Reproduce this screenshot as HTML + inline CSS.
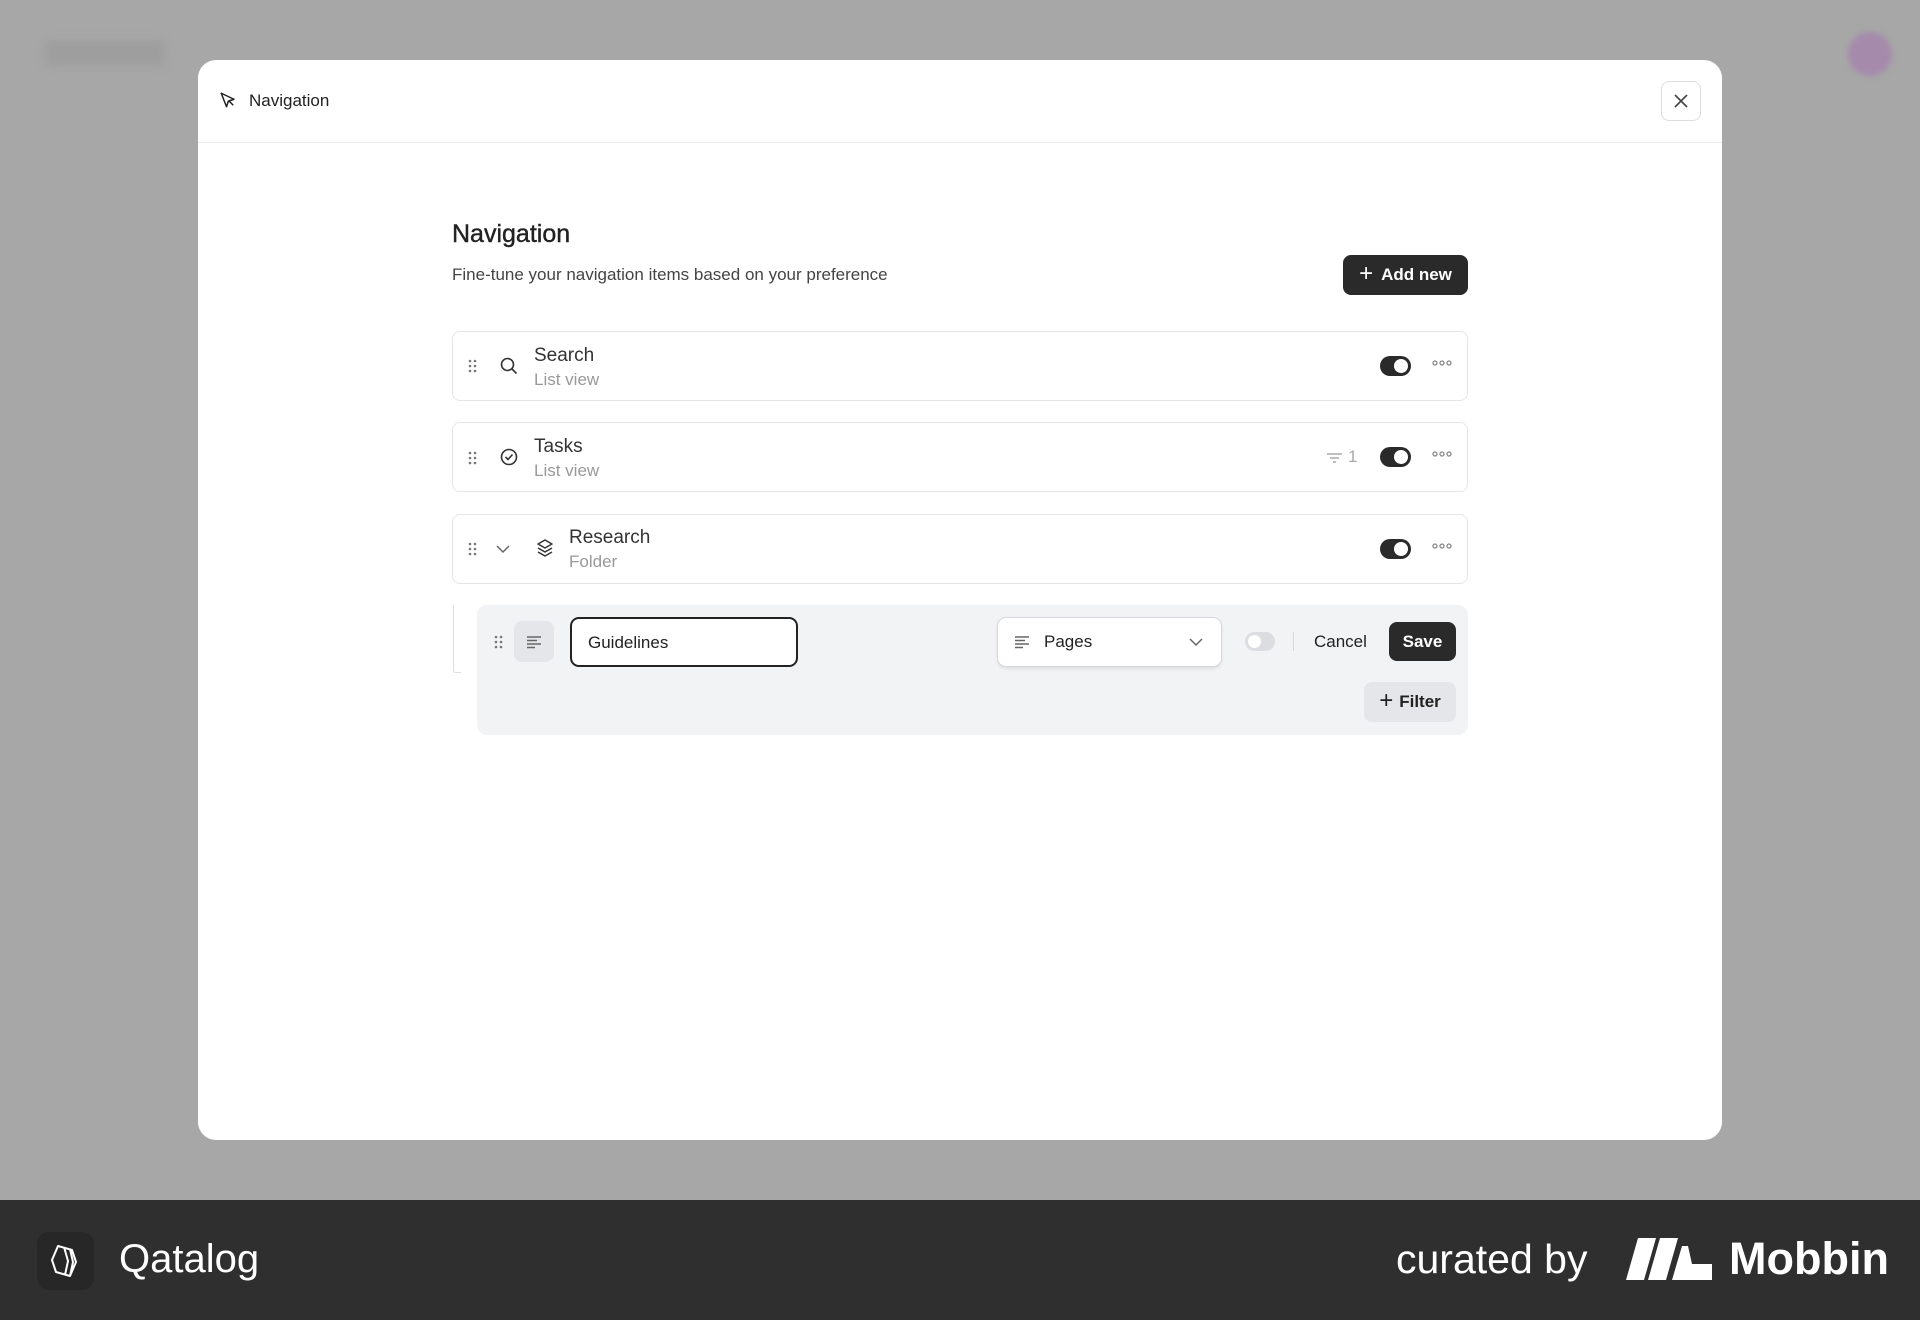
<!DOCTYPE html>
<html><head><meta charset="utf-8"><style>
*{box-sizing:border-box;margin:0;padding:0}
body{width:1920px;height:1320px;background:#a7a7a7;font-family:"Liberation Sans",sans-serif;position:relative;overflow:hidden;color:#222}
.abs{position:absolute}
.modal{left:198px;top:60px;width:1524px;height:1080px;background:#fff;border-radius:18px}
.row{left:452px;width:1016px;height:70px;border:1.5px solid #e6e6e8;border-radius:8px;background:#fff}
.t{font-size:19px;color:#333}
.s{font-size:17px;color:#999}
.tog{width:31px;height:20px;border-radius:10px;background:#2a2a2a}
.tog::after{content:"";position:absolute;right:3px;top:3px;width:14px;height:14px;border-radius:50%;background:#fff}
.btn{background:#2a2a2a;color:#fff;border-radius:8px;font-weight:bold;display:flex;align-items:center;justify-content:center}
</style></head><body>
<div class="abs" style="left:45px;top:40px;width:120px;height:26px;background:#9e9e9e;border-radius:6px;filter:blur(4px)"></div>
<div class="abs" style="left:1848px;top:32px;width:44px;height:44px;border-radius:50%;background:#a58aac;filter:blur(3px)"></div>

<div class="abs modal"></div>
<svg class="abs" style="left:219px;top:91px" width="18" height="18" viewBox="0 0 24 24" fill="none" stroke="#222" stroke-width="2" stroke-linejoin="round"><path d="M3 3l7 18 2.5-7.5L20 11z M13 13l6 6"/></svg>
<div class="abs" style="left:249px;top:91px;font-size:17px;color:#222">Navigation</div>
<div class="abs" style="left:198px;top:142px;width:1524px;height:1px;background:#eaeaea"></div>
<div class="abs" style="left:1661px;top:81px;width:40px;height:40px;border:1.5px solid #ddd;border-radius:8px"></div>
<svg class="abs" style="left:1673px;top:93px" width="16" height="16" viewBox="0 0 16 16" stroke="#444" stroke-width="1.6"><path d="M2 2l12 12M14 2L2 14"/></svg>

<div class="abs" style="left:452px;top:220px;font-size:25px;color:#222;-webkit-text-stroke:0.4px #222">Navigation</div>
<div class="abs" style="left:452px;top:265px;font-size:17px;color:#444">Fine-tune your navigation items based on your preference</div>
<div class="abs btn" style="left:1343px;top:255px;width:125px;height:40px;font-size:17px"><span style="font-weight:normal;font-size:24px;margin-right:8px;margin-top:-3px">+</span>Add new</div>

<!-- rows -->
<div class="abs row" style="top:331px"></div>
<div class="abs row" style="top:422px"></div>
<div class="abs row" style="top:514px"></div>
<!-- drag handles -->
<svg class="abs" style="left:468px;top:359px" width="10" height="14" fill="#777"><circle cx="2" cy="2" r="1.3"/><circle cx="7" cy="2" r="1.3"/><circle cx="2" cy="7" r="1.3"/><circle cx="7" cy="7" r="1.3"/><circle cx="2" cy="12" r="1.3"/><circle cx="7" cy="12" r="1.3"/></svg>
<svg class="abs" style="left:468px;top:451px" width="10" height="14" fill="#777"><circle cx="2" cy="2" r="1.3"/><circle cx="7" cy="2" r="1.3"/><circle cx="2" cy="7" r="1.3"/><circle cx="7" cy="7" r="1.3"/><circle cx="2" cy="12" r="1.3"/><circle cx="7" cy="12" r="1.3"/></svg>
<svg class="abs" style="left:468px;top:542px" width="10" height="14" fill="#777"><circle cx="2" cy="2" r="1.3"/><circle cx="7" cy="2" r="1.3"/><circle cx="2" cy="7" r="1.3"/><circle cx="7" cy="7" r="1.3"/><circle cx="2" cy="12" r="1.3"/><circle cx="7" cy="12" r="1.3"/></svg>
<!-- icons -->
<svg class="abs" style="left:499px;top:356px" width="20" height="20" viewBox="0 0 20 20" fill="none" stroke="#333" stroke-width="1.6"><circle cx="8.5" cy="8.5" r="6"/><path d="M13 13l4.5 4.5"/></svg>
<svg class="abs" style="left:499px;top:447px" width="20" height="20" viewBox="0 0 20 20" fill="none" stroke="#333" stroke-width="1.6"><circle cx="10" cy="10" r="7.5"/><path d="M6.5 10l2.5 2.5 4.5-5"/></svg>
<svg class="abs" style="left:495px;top:543px" width="16" height="12" viewBox="0 0 16 12" fill="none" stroke="#666" stroke-width="1.5"><path d="M2 3l6 6 6-6"/></svg>
<svg class="abs" style="left:535px;top:538px" width="20" height="20" viewBox="0 0 20 20" fill="none" stroke="#333" stroke-width="1.5" stroke-linejoin="round"><path d="M10 2l7 4-7 4-7-4z M3 10l7 4 7-4 M3 14l7 4 7-4"/></svg>
<div class="abs t" style="left:534px;top:345px">Search</div><div class="abs s" style="left:534px;top:370px">List view</div>
<div class="abs t" style="left:534px;top:436px">Tasks</div><div class="abs s" style="left:534px;top:461px">List view</div>
<div class="abs t" style="left:569px;top:527px">Research</div><div class="abs s" style="left:569px;top:552px">Folder</div>
<!-- right controls -->
<div class="abs tog" style="left:1380px;top:356px"></div>
<div class="abs tog" style="left:1380px;top:447px"></div>
<div class="abs tog" style="left:1380px;top:539px"></div>
<svg class="abs" style="left:1432px;top:360px" width="20" height="6" fill="none" stroke="#888" stroke-width="1.3"><circle cx="3" cy="3" r="2"/><circle cx="10" cy="3" r="2"/><circle cx="17" cy="3" r="2"/></svg>
<svg class="abs" style="left:1432px;top:451px" width="20" height="6" fill="none" stroke="#888" stroke-width="1.3"><circle cx="3" cy="3" r="2"/><circle cx="10" cy="3" r="2"/><circle cx="17" cy="3" r="2"/></svg>
<svg class="abs" style="left:1432px;top:543px" width="20" height="6" fill="none" stroke="#888" stroke-width="1.3"><circle cx="3" cy="3" r="2"/><circle cx="10" cy="3" r="2"/><circle cx="17" cy="3" r="2"/></svg>
<svg class="abs" style="left:1326px;top:452px" width="17" height="12" stroke="#aaa" stroke-width="1.4"><path d="M1 2h15M4 6h9M7 10h3"/></svg>
<div class="abs" style="left:1348px;top:447px;font-size:17px;color:#aaa">1</div>

<!-- edit panel -->
<div class="abs" style="left:453px;top:605px;width:8px;height:68px;border-left:1.5px solid #ddd;border-bottom:1.5px solid #ddd;border-bottom-left-radius:3px"></div>
<div class="abs" style="left:477px;top:605px;width:991px;height:130px;background:#f2f3f5;border-radius:10px"></div>
<svg class="abs" style="left:494px;top:635px" width="10" height="14" fill="#777"><circle cx="2" cy="2" r="1.3"/><circle cx="7" cy="2" r="1.3"/><circle cx="2" cy="7" r="1.3"/><circle cx="7" cy="7" r="1.3"/><circle cx="2" cy="12" r="1.3"/><circle cx="7" cy="12" r="1.3"/></svg>
<div class="abs" style="left:514px;top:621px;width:40px;height:41px;background:#e5e6e9;border-radius:8px"></div>
<svg class="abs" style="left:526px;top:635px" width="16" height="14" stroke="#666" stroke-width="1.4"><path d="M1 2h14M1 5.5h10M1 9h14M1 12.5h8"/></svg>
<div class="abs" style="left:570px;top:617px;width:228px;height:50px;border:2.5px solid #222;border-radius:9px;background:#fff;font-size:17px;padding:14px 0 0 16px">Guidelines</div>
<div class="abs" style="left:997px;top:617px;width:225px;height:50px;border:1.5px solid #d8d8dc;border-radius:9px;background:#fff;box-shadow:0 2px 3px rgba(0,0,0,.08);font-size:17px;padding:14px 0 0 46px">Pages</div>
<svg class="abs" style="left:1014px;top:635px" width="16" height="14" stroke="#666" stroke-width="1.4"><path d="M1 2h14M1 5.5h10M1 9h14M1 12.5h8"/></svg>
<svg class="abs" style="left:1188px;top:636px" width="16" height="12" fill="none" stroke="#666" stroke-width="1.5"><path d="M2 3l6 6 6-6"/></svg>
<div class="abs" style="left:1245px;top:632px;width:30px;height:19px;border-radius:10px;background:#dcdde0"></div>
<div class="abs" style="left:1248px;top:635px;width:13px;height:13px;border-radius:50%;background:#fff"></div>
<div class="abs" style="left:1293px;top:632px;width:1px;height:19px;background:#d8d8d8"></div>
<div class="abs" style="left:1314px;top:632px;font-size:17px;color:#222">Cancel</div>
<div class="abs btn" style="left:1389px;top:622px;width:67px;height:39px;font-size:17px">Save</div>
<div class="abs" style="left:1364px;top:682px;width:92px;height:40px;background:#e5e6e9;border-radius:8px;font-size:17px;font-weight:bold;display:flex;align-items:center;justify-content:center;color:#222"><span style="font-weight:normal;font-size:24px;margin-right:6px;margin-top:-3px">+</span>Filter</div>

<!-- footer -->
<div class="abs" style="left:0;top:1200px;width:1920px;height:120px;background:#2f2f2f"></div>
<div class="abs" style="left:37px;top:1232px;width:57px;height:58px;background:#272727;border-radius:12px"></div>
<svg class="abs" style="left:46px;top:1240px" width="40" height="42" viewBox="0 0 40 42" fill="none" stroke="#fff" stroke-width="2" stroke-linejoin="round"><path d="M12 6l14 4 4 12-6 14-14-4-4-12z M18 7l4 14-3 14 M24 9l3 13-3 14"/></svg>
<div class="abs" style="left:119px;top:1237px;font-size:40px;color:#fff">Qatalog</div>
<div class="abs" style="left:1396px;top:1236px;font-size:41px;color:#fff">curated by</div>
<svg class="abs" style="left:1626px;top:1238px" width="89" height="42" viewBox="0 0 89 42" fill="#fff"><path d="M0 42L12 0h18L18 42z M22 42L34 0h18L40 42z M46 42L56 8h6l4 18h20v16z"/></svg>
<div class="abs" style="left:1729px;top:1233px;font-size:45px;font-weight:bold;color:#fff">Mobbin</div>
</body></html>
